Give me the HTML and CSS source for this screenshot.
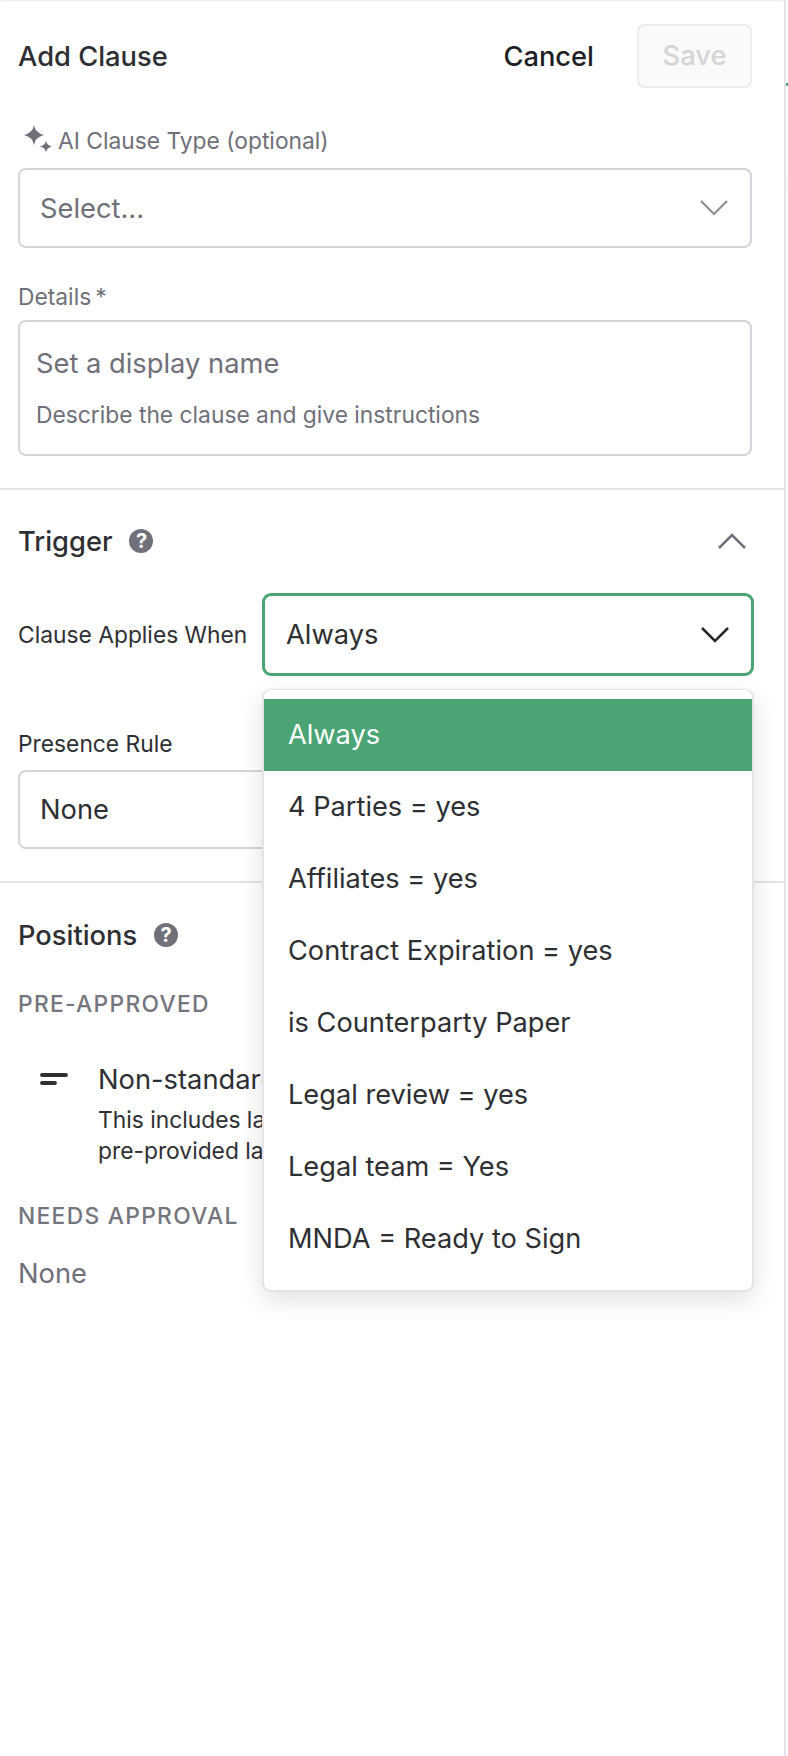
FILE: index.html
```html
<!DOCTYPE html>
<html lang="en">
<head>
<meta charset="utf-8">
<title>Add Clause</title>
<link rel="stylesheet" href="styles.css">
</head>
<body>
<div class="page">
  <aside class="panel">
    <header class="head">
      <h1 class="title">Add Clause</h1>
      <div class="actions">
        <button class="cancel">Cancel</button>
        <button class="save" disabled>Save</button>
      </div>
    </header>

    <section class="intro">
      <label class="label label-ai">
        <svg class="sparkle" viewBox="0 0 30 30" aria-hidden="true"><path d="M11 1Q12.200 8.800 21 11 12.200 13.200 11 21 9.800 13.200 1 11 9.800 8.800 11 1Z"/><path d="M23 16.500Q23.800 21.700 29 22.500 23.800 23.300 23 28.500 22.200 23.300 17 22.500 22.200 21.700 23 16.500Z"/></svg>
        AI Clause Type (optional)
      </label>
      <div class="select select-placeholder">
        <span>Select...</span>
        <svg class="chev chev-muted" viewBox="0 0 30 18" aria-hidden="true"><path d="M2 2l13 13L28 2"/></svg>
      </div>
      <label class="label label-details">Details<span class="req">*</span></label>
      <div class="details">
        <div class="d-name">Set a display name</div>
        <div class="d-desc">Describe the clause and give instructions</div>
      </div>
    </section>

    <section class="trigger">
      <div class="sec-head">
        <h2 class="sec-title">Trigger</h2>
        <span class="help">?</span>
        <svg class="chev-up" viewBox="0 0 30 18" aria-hidden="true"><path d="M2 16L15 3l13 13"/></svg>
      </div>
      <div class="applies">
        <label class="applies-label">Clause Applies When</label>
        <div class="select-wrap">
          <div class="select select-focus">
            <span>Always</span>
            <svg class="chev chev-dark" viewBox="0 0 30 18" aria-hidden="true"><path d="M2 2l13 13L28 2"/></svg>
          </div>
          <ul class="menu">
            <li class="opt opt-active">Always</li>
            <li class="opt">4 Parties = yes</li>
            <li class="opt">Affiliates = yes</li>
            <li class="opt">Contract Expiration = yes</li>
            <li class="opt">is Counterparty Paper</li>
            <li class="opt">Legal review = yes</li>
            <li class="opt">Legal team = Yes</li>
            <li class="opt">MNDA = Ready to Sign</li>
          </ul>
        </div>
      </div>
      <label class="presence-label">Presence Rule</label>
      <div class="select select-value"><span>None</span></div>
    </section>

    <section class="positions">
      <div class="sec-head">
        <h2 class="sec-title">Positions</h2>
        <span class="help">?</span>
      </div>
      <div class="caps caps-first">PRE-APPROVED</div>
      <div class="position">
        <svg class="pos-icon" viewBox="0 0 28 14" aria-hidden="true"><path d="M2 4h24M2 12h13"/></svg>
        <div class="pos-body">
          <div class="pos-name">Non-standard</div>
          <div class="pos-desc">This includes language<br>pre-provided language</div>
        </div>
      </div>
      <div class="caps caps-second">NEEDS APPROVAL</div>
      <div class="none">None</div>
    </section>
  </aside>
  <div class="gutter">
    <span class="tick tick-green"></span>
    <span class="tick tick-grey"></span>
  </div>
</div>
</body>
</html>
```

FILE: styles.css
```css
* { box-sizing: border-box; }
html, body { margin: 0; padding: 0; background: #fff; }
body { font-family: Inter, "Liberation Sans", sans-serif; color: #2e2f33; }
.page { display: flex; width: 788px; height: 1756px; overflow: hidden; }
.panel { width: 786px; flex: none; border-right: 2px solid #e4e4e8; box-shadow: inset 0 3px 3px -2px #e8e8ea; }
.gutter { flex: 1; display: flex; flex-direction: column; }
.tick { display: block; width: 2px; height: 3px; }
.tick-green { margin-top: 83px; background: #4aa473; }
.tick-grey { margin-top: 97px; height: 2px; background: #e8e8ea; }

.head { display: flex; align-items: center; justify-content: space-between; height: 87px; padding: 24px 32px 0 18px; }
.title { margin: 2px 0 0; font-size: 27.300px; font-weight: 500; line-height: 32px; }
.actions { display: flex; align-items: center; gap: 43px; }
.cancel { border: 0; background: none; margin-top: 2px; padding: 0; font: 500 27.300px/32px Inter, sans-serif; color: #1e1f24; }
.save { width: 115px; height: 64px; border: 2px solid #ecedef; border-radius: 7px; background: #f9fafa; padding: 0; font: 500 27.300px/32px Inter, sans-serif; color: #d4d5d8; }

.intro { padding: 40px 32px 0 18px; height: 403px; border-bottom: 2px solid #e4e4e8; }
.label { display: flex; align-items: center; font-size: 22.800px; line-height: 28px; color: #6f7079; }
.label-ai { height: 28px; }
.sparkle { width: 30px; height: 30px; fill: #6f7079; margin: -4px 5px 0 5px; flex: none; }
.select { display: flex; align-items: center; justify-content: space-between; border: 2px solid #d4d4da; border-radius: 8px; height: 80px; padding: 0 21px 0 20px; font-size: 27.300px; background: #fff; }
.select-placeholder { margin-top: 13px; color: #6f7079; }
.chev { width: 30px; height: 18px; fill: none; stroke-width: 2.200; flex: none; }
.chev-muted { stroke: #8e8f96; }
.chev-dark { stroke: #26272b; stroke-width: 2.500; }
.label-details { margin-top: 35px; }
.req { margin-left: 4px; }
.details { margin-top: 9px; height: 136px; border: 2px solid #d4d4da; border-radius: 8px; padding: 26px 16px 0; }
.d-name { font-size: 27.300px; line-height: 32px; color: #6f7079; }
.d-desc { margin-top: 21px; font-size: 22.800px; line-height: 28px; color: #6f7079; }

.trigger { height: 393px; padding: 33px 32px 0 18px; border-bottom: 2px solid #e4e4e8; }
.sec-head { display: flex; align-items: center; height: 36px; }
.sec-title { margin: 2px 0 0; font-size: 27.300px; font-weight: 500; line-height: 32px; }
.help { width: 24px; height: 24px; border-radius: 50%; margin-left: 17px; background: #6f7079; color: #fff; font-size: 20px; font-weight: 700; line-height: 24px; text-align: center; }
.chev-up { margin-left: auto; margin-right: 5px; width: 30px; height: 18px; fill: none; stroke: #6f7079; stroke-width: 2.500; }

.applies { display: flex; align-items: center; margin-top: 34px; }
.applies-label { font-size: 22.800px; line-height: 28px; flex: none; }
.select-wrap { position: relative; width: 492px; margin-left: auto; margin-right: -2px; }
.select-focus { height: 83px; border: 3px solid #4aa473; border-radius: 9px; padding-left: 21px; }
.menu { position: absolute; z-index: 2; left: 0; right: 0; top: 96px; margin: 0; list-style: none; height: 603px; padding: 9px 0 0; background: #fff; border: 2px solid #e4e4e8; border-top-width: 1px; border-radius: 9px; box-shadow: 0 8px 24px rgba(20, 20, 30, .12); }
.opt { height: 72px; line-height: 72px; padding-left: 24px; font-size: 27.200px; color: #2e2f33; }
.opt-active { background: #4aa473; color: #fff; }

.presence-label { display: block; margin-top: 54px; font-size: 22.800px; line-height: 28px; }
.select-value { margin-top: 12px; width: 400px; height: 79px; color: #2e2f33; }

.positions { padding: 34px 32px 0 18px; }
.caps { font-size: 22.800px; line-height: 28px; font-weight: 500; letter-spacing: 1.300px; color: #74757d; }
.caps-first { margin-top: 37px; }
.position { display: flex; margin: 45px 0 0 22px; }
.pos-icon { width: 28px; height: 14px; flex: none; margin: 8px 30px 0 0; fill: none; stroke: #2e2f33; stroke-width: 3.800; stroke-linecap: round; }
.pos-body { flex: 1; }
.pos-name { font-size: 27.300px; line-height: 34px; }
.pos-desc { margin-top: 7px; font-size: 22.800px; line-height: 31px; }
.caps-second { margin-top: 36px; }
.none { margin-top: 28px; font-size: 27.300px; line-height: 32px; color: #6f7079; }
```
